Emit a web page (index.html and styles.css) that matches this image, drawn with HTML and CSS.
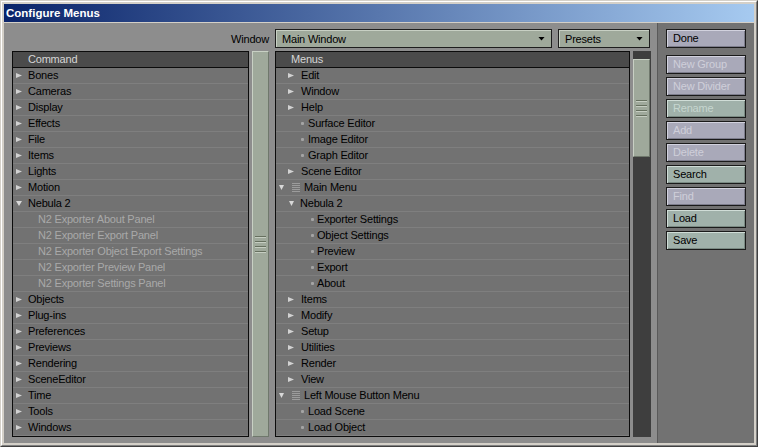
FILE: index.html
```html
<!DOCTYPE html>
<html>
<head>
<meta charset="utf-8">
<title>Configure Menus</title>
<link rel="stylesheet" href="styles.css">
</head>
<body>
<div class="win">
  <div class="win2">
    <div class="title">Configure Menus</div>
    <div class="client">
      <div class="main">
        <div class="toolbar">
          <span class="lbl">Window</span>
          <div class="dd dd-main"><span class="dd-text">Main Window</span><i class="dd-arrow"></i></div>
          <div class="dd dd-presets"><span class="dd-text">Presets</span><i class="dd-arrow"></i></div>
        </div>
        <div class="lists">
          <div class="list list-left">
            <div class="hdr">Command</div>
            <div class="row br"><i class="arr"></i>Bones</div>
            <div class="row br"><i class="arr"></i>Cameras</div>
            <div class="row br"><i class="arr"></i>Display</div>
            <div class="row br"><i class="arr"></i>Effects</div>
            <div class="row br"><i class="arr"></i>File</div>
            <div class="row br"><i class="arr"></i>Items</div>
            <div class="row br"><i class="arr"></i>Lights</div>
            <div class="row br"><i class="arr"></i>Motion</div>
            <div class="row br"><i class="arr-d"></i>Nebula 2</div>
            <div class="row dis">N2 Exporter About Panel</div>
            <div class="row dis">N2 Exporter Export Panel</div>
            <div class="row dis">N2 Exporter Object Export Settings</div>
            <div class="row dis">N2 Exporter Preview Panel</div>
            <div class="row dis">N2 Exporter Settings Panel</div>
            <div class="row br"><i class="arr"></i>Objects</div>
            <div class="row br"><i class="arr"></i>Plug-ins</div>
            <div class="row br"><i class="arr"></i>Preferences</div>
            <div class="row br"><i class="arr"></i>Previews</div>
            <div class="row br"><i class="arr"></i>Rendering</div>
            <div class="row br"><i class="arr"></i>SceneEditor</div>
            <div class="row br"><i class="arr"></i>Time</div>
            <div class="row br"><i class="arr"></i>Tools</div>
            <div class="row br"><i class="arr"></i>Windows</div>
          </div>
          <div class="vs-full">
            <div class="grips"><i class="grip"></i><i class="grip"></i><i class="grip"></i><i class="grip"></i></div>
          </div>
          <div class="list list-mid">
            <div class="hdr">Menus</div>
            <div class="row br1"><i class="arr"></i>Edit</div>
            <div class="row br1"><i class="arr"></i>Window</div>
            <div class="row br1"><i class="arr"></i>Help</div>
            <div class="row lf2"><i class="dot"></i>Surface Editor</div>
            <div class="row lf2"><i class="dot"></i>Image Editor</div>
            <div class="row lf2"><i class="dot"></i>Graph Editor</div>
            <div class="row br1"><i class="arr"></i>Scene Editor</div>
            <div class="row root"><i class="arr-d sm"></i><svg class="menu-ico" width="8" height="9" viewBox="0 0 8 9"><path d="M0 0.5h8M0 2.5h8M0 4.5h8M0 6.5h8M0 8.5h8" stroke="#9c9c9c" stroke-width="1"/></svg>Main Menu</div>
            <div class="row brd1"><i class="arr-d sm"></i>Nebula 2</div>
            <div class="row lf3"><i class="dot"></i>Exporter Settings</div>
            <div class="row lf3"><i class="dot"></i>Object Settings</div>
            <div class="row lf3"><i class="dot"></i>Preview</div>
            <div class="row lf3"><i class="dot"></i>Export</div>
            <div class="row lf3"><i class="dot"></i>About</div>
            <div class="row br1"><i class="arr"></i>Items</div>
            <div class="row br1"><i class="arr"></i>Modify</div>
            <div class="row br1"><i class="arr"></i>Setup</div>
            <div class="row br1"><i class="arr"></i>Utilities</div>
            <div class="row br1"><i class="arr"></i>Render</div>
            <div class="row br1"><i class="arr"></i>View</div>
            <div class="row root"><i class="arr-d sm"></i><svg class="menu-ico" width="8" height="9" viewBox="0 0 8 9"><path d="M0 0.5h8M0 2.5h8M0 4.5h8M0 6.5h8M0 8.5h8" stroke="#9c9c9c" stroke-width="1"/></svg>Left Mouse Button Menu</div>
            <div class="row lf2"><i class="dot"></i>Load Scene</div>
            <div class="row lf2"><i class="dot"></i>Load Object</div>
          </div>
          <div class="vs-track">
            <div class="thumb">
              <div class="grips"><i class="grip"></i><i class="grip"></i><i class="grip"></i><i class="grip"></i></div>
            </div>
          </div>
        </div>
      </div>
      <div class="side">
        <div class="btn lav done">Done</div>
        <div class="btn lav off">New Group</div>
        <div class="btn lav off">New Divider</div>
        <div class="btn grn off">Rename</div>
        <div class="btn lav off">Add</div>
        <div class="btn lav off">Delete</div>
        <div class="btn grn">Search</div>
        <div class="btn lav off">Find</div>
        <div class="btn grn">Load</div>
        <div class="btn grn">Save</div>
      </div>
    </div>
  </div>
</div>
</body>
</html>
```

FILE: styles.css
```css
html, body {
  margin: 0;
  padding: 0;
}
body {
  background: #d4d0c8;
  font-family: "Liberation Sans", Arial, sans-serif;
  font-size: 11px;
  letter-spacing: -0.2px;
  color: #000;
}
.win {
  width: 758px;
  height: 447px;
  box-sizing: border-box;
  border: 1px solid;
  border-color: #d4d0c8 #404040 #404040 #d4d0c8;
}
.win2 {
  height: 100%;
  box-sizing: border-box;
  border: 1px solid;
  border-color: #ffffff #808080 #808080 #ffffff;
  padding: 2px;
  background: #d4d0c8;
  display: flex;
  flex-direction: column;
}
.title {
  height: 18px;
  line-height: 18px;
  flex: none;
  background: linear-gradient(to right, #0a246a, #a6caf0);
  color: #fff;
  font-weight: bold;
  font-size: 11.5px;
  letter-spacing: 0;
  padding-left: 2px;
  margin-bottom: 1px;
}
.client {
  flex: 1;
  display: flex;
  min-height: 0;
}
.main {
  flex: 1;
  background: #8d8d8d;
  padding: 6px 6px 6px 8px;
  display: flex;
  flex-direction: column;
  gap: 3px;
}
.toolbar {
  height: 19px;
  display: flex;
  align-items: center;
  gap: 6px;
  padding-right: 1px;
}
.lbl {
  flex: 1;
  text-align: right;
}
.dd {
  height: 19px;
  box-sizing: border-box;
  border: 1px solid #1e1e1e;
  background: #9fa99b;
  box-shadow: inset 1px 1px #c8d0c4;
  display: flex;
  align-items: center;
  padding: 0 6px;
}
.dd-main { width: 277px; }
.dd-presets { width: 92px; }
.dd-text { flex: 1; }
.dd-arrow {
  width: 7px;
  height: 4px;
  background: #000;
  clip-path: polygon(0 0, 100% 0, 50% 100%);
}
.lists {
  display: flex;
  height: 386px;
}
.list {
  box-sizing: border-box;
  height: 386px;
  border: 1px solid #0c0c0c;
  background: #727272;
  overflow: hidden;
}
.list-left { width: 237px; margin-right: 3px; }
.list-mid { width: 355px; margin-right: 3px; }
.hdr {
  height: 15px;
  line-height: 15px;
  border-bottom: 1px solid #0c0c0c;
  background: #4b4b4b;
  color: #d6d6d6;
  padding-left: 15px;
}
.row {
  height: 15px;
  line-height: 15px;
  border-bottom: 1px solid #7f7f7f;
  display: flex;
  align-items: center;
  white-space: nowrap;
}
.arr {
  width: 6px;
  height: 5px;
  background: #d2d2d2;
  clip-path: polygon(0 0, 100% 50%, 0 100%);
  flex: none;
}
.arr-d {
  width: 6px;
  height: 5px;
  background: #d8d8d8;
  clip-path: polygon(0 0, 100% 0, 50% 100%);
  flex: none;
}
.arr-d.sm { width: 5px; }
.dot {
  width: 3px;
  height: 3px;
  border-radius: 1px;
  background: #a4a4a4;
  flex: none;
}
.menu-ico { flex: none; display: block; }

/* left list */
.list-left .br { padding-left: 3px; }
.list-left .br i { margin-right: 6px; }
.list-left .dis { padding-left: 25px; color: #a9a9a9; }

/* middle list */
.br1 { padding-left: 12px; }
.br1 .arr { margin-right: 7px; }
.lf2 { padding-left: 25px; }
.lf2 .dot { margin-right: 4px; }
.lf3 { padding-left: 35px; }
.lf3 .dot { margin-right: 3px; }
.root { padding-left: 3px; }
.root .arr-d { margin-right: 8px; }
.root .menu-ico { margin-right: 4px; }
.brd1 { padding-left: 13px; }
.brd1 .arr-d { margin-right: 6px; }

/* scrollbars */
.vs-full {
  width: 17px;
  height: 386px;
  box-sizing: border-box;
  margin-right: 6px;
  background: #9fa99b;
  border-top: 1px solid #c8d0c4;
  border-left: 1px solid #c8d0c4;
  border-bottom: 1px solid #6f786c;
  border-right: 1px solid #6f786c;
  display: flex;
  align-items: center;
  justify-content: center;
}
.vs-track {
  width: 18px;
  height: 386px;
  box-sizing: border-box;
  background: #3e3e3e;
  padding-top: 8px;
}
.thumb {
  width: 17px;
  height: 98px;
  box-sizing: border-box;
  background: #9fa99b;
  border-top: 1px solid #c8d0c4;
  border-left: 1px solid #c8d0c4;
  border-bottom: 1px solid #6f786c;
  border-right: 1px solid #6f786c;
  display: flex;
  align-items: center;
  justify-content: center;
}
.grips {
  display: flex;
  flex-direction: column;
  gap: 3px;
}
.grip {
  display: block;
  width: 11px;
  height: 1px;
  background: #66705f;
  border-bottom: 1px solid #c6cec2;
}

/* side buttons */
.side {
  width: 97px;
  box-sizing: border-box;
  border-left: 1px solid #595959;
  background: #727272;
  padding: 6px 0 0 8px;
}
.btn {
  width: 80px;
  height: 19px;
  box-sizing: border-box;
  border: 1px solid #1a1a1a;
  line-height: 17px;
  padding-left: 6px;
  margin-bottom: 3px;
  white-space: nowrap;
}
.btn.done { margin-bottom: 7px; }
.lav {
  background: #a9a9b9;
  box-shadow: inset 1px 1px #d2d2de, inset -1px -1px #7d7d8c;
}
.grn {
  background: #a0b1aa;
  box-shadow: inset 1px 1px #d0ddd7, inset -1px -1px #7a8a83;
}
.lav.off { color: #cfcfda; }
.grn.off { color: #c6d6cf; }
```
